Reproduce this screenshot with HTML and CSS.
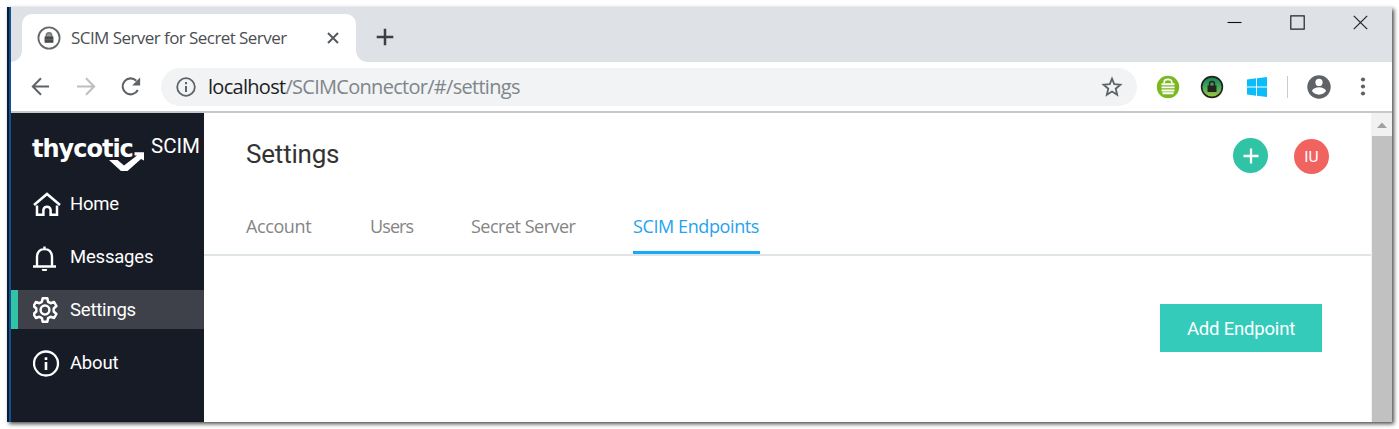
FILE: index.html
```html
<!DOCTYPE html>
<html lang="en">
<head>
<meta charset="utf-8">
<title>SCIM Server for Secret Server</title>
<link rel="stylesheet" href="styles.css">
</head>
<body>
<div class="window">
  <div class="tabstrip">
    <div class="tab">
      <svg class="favicon" width="24" height="24" viewBox="0 0 24 24"><circle cx="12" cy="12" r="10.6" fill="#fff" stroke="#66696b" stroke-width="1.8"/><path d="M9.2 11V9.5a2.8 2.8 0 0 1 5.6 0V11" fill="#999" stroke="#777" stroke-width="1.4"/><path d="M7.6 10.5h8.8v6.3H7.6z" fill="#47494b"/><path d="M7.6 13.7h8.8" stroke="#777" stroke-width=".7"/></svg>
      <span class="tab-title">SCIM Server for Secret Server</span>
      <svg class="tab-close" width="14" height="14" viewBox="0 0 14 14"><path d="M2 2l10 10M12 2L2 12" stroke="#55595e" stroke-width="2" fill="none"/></svg>
    </div>
    <svg class="new-tab" width="18" height="18" viewBox="0 0 18 18"><path d="M9 .7v16.6M.7 9h16.6" stroke="#3c4043" stroke-width="2.5"/></svg>
    <div class="controls">
      <svg width="15" height="15" viewBox="0 0 15 15"><path d="M.5 7.5h14" stroke="#111" stroke-width="1.1"/></svg>
      <svg width="15" height="15" viewBox="0 0 15 15"><path d="M.8 .8h13.400v13.400H.8z" stroke="#222" stroke-width="1.2" fill="none"/></svg>
      <svg width="15" height="15" viewBox="0 0 15 15"><path d="M.8 .8l13.400 13.400M14.200 .8L.8 14.200" stroke="#222" stroke-width="1.2"/></svg>
    </div>
  </div>
  <div class="toolbar">
    <svg class="back" width="20" height="20" viewBox="0 0 20 20"><path d="M18 9.500H2M10 1.300L1.800 9.500l8.200 8.200" fill="none" stroke="#5f6368" stroke-width="2"/></svg>
    <svg class="forward" width="20" height="20" viewBox="0 0 20 20"><path d="M1 9.500h17M10 1.300l8.200 8.200-8.200 8.200" fill="none" stroke="#bcbec0" stroke-width="2"/></svg>
    <svg class="reload" width="22" height="22" viewBox="0 0 22 22"><path d="M16.300 4.700A8 8 0 1 0 17.800 14" fill="none" stroke="#5f6368" stroke-width="2.100"/><path d="M20.100 1.500v8.100h-8z" fill="#5f6368"/></svg>
    <div class="omnibox">
      <svg width="20" height="20" viewBox="0 0 20 20"><circle cx="10" cy="10" r="8.800" fill="none" stroke="#5f6368" stroke-width="1.800"/><path d="M10 5v2.200M10 9v6" stroke="#5f6368" stroke-width="2"/></svg>
      <span class="url"><b>localhost</b>/SCIMConnector/#/settings</span>
      <svg class="star" width="22" height="22" viewBox="0 0 22 22"><path d="M11 2.700l2.200 5.500 6.200.5-4.700 4 1.500 6.100-5.200-3.300-5.200 3.300 1.500-6.100-4.700-4 6.200-.5z" fill="none" stroke="#5f6368" stroke-width="1.800"/></svg>
    </div>
    <svg class="ext-vault" width="24" height="24" viewBox="0 0 24 24"><circle cx="12" cy="12" r="11.200" fill="#79b91e"/><path d="M8.200 8.100V7c0-3.400 7.600-3.400 7.600 0v1.100" fill="none" stroke="#fff" stroke-width="1.700"/><path d="M5.500 9.200h13M5.500 12.400h13M5.500 15.500h13M6.500 18.200h11" stroke="#fff" stroke-width="1.900"/></svg>
    <svg class="ext-lock" width="24" height="24" viewBox="0 0 24 24"><defs><linearGradient id="orb" x1="0" y1="0" x2="0" y2="1"><stop offset="0" stop-color="#168055"/><stop offset=".5" stop-color="#43a95e"/><stop offset="1" stop-color="#a8c83c"/></linearGradient></defs><circle cx="12" cy="12" r="10.400" fill="url(#orb)" stroke="#20251f" stroke-width="1.600"/><path d="M9.500 11V9a2.500 2.500 0 0 1 5 0v2" fill="none" stroke="#25251f" stroke-width="1.500"/><path d="M7.500 10.500h9v6.500h-9z" fill="#25251f"/></svg>
    <svg class="ext-windows" width="20" height="20" viewBox="0 0 20 20"><path d="M0 2.600L9 1.300v8.200H0zM10 1.200L20 0v9.500H10zM0 10.600h9v8.100l-9-1.300zM10 10.600h10V20l-10-1.300z" fill="#0bbcfb"/></svg>
    <span class="divider"></span>
    <svg class="profile" width="24" height="24" viewBox="0 0 24 24"><circle cx="12" cy="12" r="11.700" fill="#5f6368"/><circle cx="12" cy="7.400" r="3.600" fill="#fff"/><path d="M4.900 16.100c1.900-5 12.300-5 14.200 0-3.400 4.700-10.800 4.700-14.200 0z" fill="#fff"/></svg>
    <svg class="more" width="6" height="20" viewBox="0 0 6 20"><g fill="#5f6368"><circle cx="3" cy="2.500" r="2.100"/><circle cx="3" cy="9.500" r="2.100"/><circle cx="3" cy="16.500" r="2.100"/></g></svg>
  </div>
  <div class="page">
    <nav class="sidebar">
      <div class="brand">
        <span class="wordmark">thycotic</span>
        <svg class="swoosh" width="36" height="20" viewBox="0 0 36 20"><path d="M0 9h8.500l6.500 5.500L28 4.500h-2.500V1.200H35V9.500L32 8 18.500 20H12z" fill="#fff"/></svg>
        <span class="product">SCIM</span>
      </div>
      <a class="item"><svg width="28" height="28" viewBox="0 0 28 28"><path d="M1 15L14 4l13 11M4 15.500v9.300h6.400v-5.100a3.700 3.700 0 0 1 7.200 0v5.100H24v-9.300" fill="none" stroke="#fff" stroke-width="2.500"/></svg>Home</a>
      <a class="item"><svg width="28" height="28" viewBox="0 0 28 28"><path d="M0 23.500h23M4 23v-8.500C4 9 7.200 6 11.500 6S19 9 19 14.500V23M11.500 6V3.500" fill="none" stroke="#fff" stroke-width="2.400"/><path d="M8.800 26h5.400a2.700 2.500 0 0 1-5.400 0z" fill="#fff"/></svg>Messages</a>
      <a class="item active"><svg width="28" height="28" viewBox="0 0 28 28"><path d="M9.700 2.200h4.600l.8 3.600 2.500 1.400 3.500-1.200 2.300 4-2.700 2.500v3l2.700 2.500-2.300 4-3.500-1.200-2.500 1.400-.8 3.600H9.700l-.8-3.600-2.500-1.400L2.900 22 .6 18l2.700-2.500v-3L.6 10l2.300-4 3.500 1.200 2.500-1.400z" fill="none" stroke="#fff" stroke-width="2.500" stroke-linejoin="round"/><circle cx="12" cy="14" r="4.400" fill="none" stroke="#fff" stroke-width="2.500"/></svg>Settings</a>
      <a class="item"><svg width="28" height="28" viewBox="0 0 28 28"><circle cx="13" cy="14.500" r="12" fill="none" stroke="#fff" stroke-width="2.300"/><path d="M13 8.300v2.600M13 13v8" stroke="#fff" stroke-width="2.600"/></svg>About</a>
    </nav>
    <main class="main">
      <header class="header">
        <h1>Settings</h1>
        <span class="add"><svg width="16" height="16" viewBox="0 0 16 16"><path d="M8 .5v15M.5 8h15" stroke="#fff" stroke-width="2.300"/></svg></span>
        <span class="avatar">IU</span>
      </header>
      <div class="tabs">
        <a class="t-account"><span>Account</span></a>
        <a class="t-users"><span>Users</span></a>
        <a class="t-secret"><span>Secret Server</span></a>
        <a class="t-scim current"><span>SCIM Endpoints</span></a>
      </div>
      <button class="primary">Add Endpoint</button>
    </main>
    <div class="scrollbar"><div class="arrow"><svg width="10" height="6" viewBox="0 0 10 6"><path d="M0 6l5-5.500L10 6z" fill="#a0a0a0"/></svg></div><div class="thumb"></div></div>
  </div>
</div>
</body>
</html>
```
FILE: styles.css
```css
* { box-sizing: border-box; }
html, body { margin: 0; height: 429px; overflow: hidden; background: #fff; }
body { padding: 7px; font-family: Roboto, sans-serif; }
svg { display: block; flex: none; }
.window {
  width: 1385px; height: 415px;
  border-left: 2px solid #071b39;
  box-shadow: 2px 2px 4px rgba(0,0,0,.7);
  background: linear-gradient(90deg, #14508a 2px, #fff 2px);
  padding-left: 2px;
}
.tabstrip { height: 55px; display: flex; align-items: flex-start; background: #dee1e6; padding: 7px 23px 0 11px; }
.tab { position: relative; width: 334px; height: 48px; background: #fff; border-radius: 10px 10px 0 0; display: flex; align-items: center; padding: 0 16px 1px 15px; }
.tab::before, .tab::after { content: ""; position: absolute; bottom: 0; width: 11px; height: 11px; }
.tab::before { left: -11px; background: radial-gradient(circle at 0 0, transparent 10.500px, #fff 11px); }
.tab::after { right: -11px; background: radial-gradient(circle at 100% 0, transparent 10.500px, #fff 11px); }
.tab-title { font: 17px/24px "Open Sans", sans-serif; letter-spacing: -.56px; color: #4b4e52; white-space: nowrap; margin-left: 10px; }
.tab-close { margin-left: auto; }
.new-tab { margin: 14px 0 0 20px; }
.controls { display: flex; gap: 48px; margin: 1px 1px 0 auto; }
.toolbar { height: 51px; display: flex; align-items: center; background: #fff; border-bottom: 2px solid #c8c8c8; padding: 0 26px 0 20px; }
.forward { margin-left: 25px; }
.reload { margin-left: 24px; }
.omnibox { width: 976px; height: 38px; margin-left: 19px; border-radius: 19px; background: #f1f3f4; display: flex; align-items: center; padding: 0 14px 0 15px; }
.url { font: 20px/28px "Open Sans", sans-serif; letter-spacing: -.710px; color: #80858a; margin-left: 12px; white-space: nowrap; }
.url b { font-weight: 400; color: #202124; }
.star { margin-left: auto; }
.ext-vault { margin-left: 19px; }
.ext-lock { margin-left: 20px; }
.ext-windows { margin-left: 23px; }
.divider { width: 1px; height: 22px; background: #c9cbce; margin-left: 20px; }
.profile { margin-left: 19px; }
.more { margin-left: auto; }
.page { height: 309px; display: flex; }
.sidebar { width: 193px; background: #171b26; color: #fff; display: flex; flex-direction: column; gap: 14px; }
.brand { position: relative; height: 57px; padding: 18px 4px 0 21px; display: flex; justify-content: space-between; align-items: flex-start; }
.wordmark { font: bold 24px/36px "DejaVu Sans", sans-serif; letter-spacing: -1px; }
.swoosh { position: absolute; left: 98px; top: 38px; }
.product { font-size: 20.500px; line-height: 30px; letter-spacing: 0; }
.item { height: 39px; display: flex; align-items: center; gap: 9px; padding-left: 22px; font-size: 18.500px; letter-spacing: -.2px; }
.active { background: #3e4149; border-left: 7px solid #31c3a5; padding-left: 15px; }
.main { flex: 1; background: #fff; display: flex; flex-direction: column; }
.header { height: 87px; display: flex; align-items: center; padding: 0 42px; }
h1 { margin: 0 auto 6px 0; font-weight: 400; font-size: 26px; letter-spacing: -.2px; color: #333; }
.add, .avatar { width: 35px; height: 35px; border-radius: 50%; display: flex; align-items: center; justify-content: center; }
.add { background: #31c3a5; margin: 0 26px 2px 0; }
.avatar { background: #f0635f; color: #fff; font-size: 15.500px; }
.tabs { height: 56px; border-bottom: 2px solid #dfe4e4; padding-left: 42px; display: flex; font: 18px/53px "Open Sans", sans-serif; color: #858585; white-space: nowrap; }
.tabs a { height: 54px; letter-spacing: -.500px; }
.t-account { width: 124px; }
.t-users { width: 101px; }
.t-secret { width: 162px; }
.tabs .t-account { letter-spacing: -.4px; }
.tabs .t-users { letter-spacing: -.9px; }
.tabs .t-scim { width: 127px; letter-spacing: -.4px; }
.tabs .current { color: #25a3f0; border-bottom: 3px solid #16aaf8; }
.primary { align-self: flex-end; width: 162px; height: 48px; margin: 48px 49px 0 0; border: 0; padding: 2px 0 0; background: #34cbbb; color: #fff; font: 18.500px Roboto, sans-serif; letter-spacing: -.2px; }
.scrollbar { width: 21px; background: #f1f1f1; padding-left: 1px; }
.arrow { height: 23px; display: flex; align-items: center; justify-content: center; }
.thumb { height: 286px; background: #c1c1c1; }
```
